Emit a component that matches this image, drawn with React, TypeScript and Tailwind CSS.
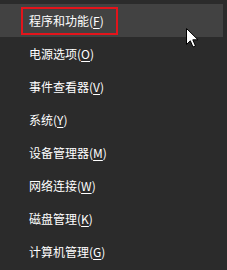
const items = [
  { label: "程序和功能", key: "F" },
  { label: "电源选项", key: "O" },
  { label: "事件查看器", key: "V" },
  { label: "系统", key: "Y" },
  { label: "设备管理器", key: "M" },
  { label: "网络连接", key: "W" },
  { label: "磁盘管理", key: "K" },
  { label: "计算机管理", key: "G" },
];

const Label = ({ label, k }: { label: string; k: string }) => (
  <span className="whitespace-nowrap">
    {label}(<span className="underline underline-offset-2">{k}</span>)
  </span>
);

export default function App() {
  return (
    <div
      className="relative w-[227px] h-[270px] bg-[#2b2b2b] pt-[4px] text-[12px] text-white overflow-hidden"
      style={{ fontFamily: '"Noto Sans CJK SC", "Noto Sans", sans-serif' }}
    >
      {items.map((item, i) =>
        i === 0 ? (
          <div key={item.key} className="flex items-center w-[223px] h-[33px] bg-[#424242]">
            <span className="ml-[21px] flex items-center h-[28px] pl-[6px] pr-[12px] border-2 border-[#e3141b]">
              <Label label={item.label} k={item.key} />
            </span>
          </div>
        ) : (
          <div key={item.key} className="flex items-center w-[223px] h-[33px] pl-[29px]">
            <Label label={item.label} k={item.key} />
          </div>
        )
      )}

      <svg
        className="absolute left-[186px] top-[28px]"
        width="14"
        height="21"
        viewBox="0 0 14 21"
      >
        <path
          d="M0.5 0.5 L0.5 16.5 L4.3 12.8 L7 19 L9.5 18 L6.8 11.8 L12 11.8 Z"
          fill="#fff"
          stroke="#000"
          strokeWidth="1"
          strokeLinejoin="miter"
        />
      </svg>
    </div>
  );
}
